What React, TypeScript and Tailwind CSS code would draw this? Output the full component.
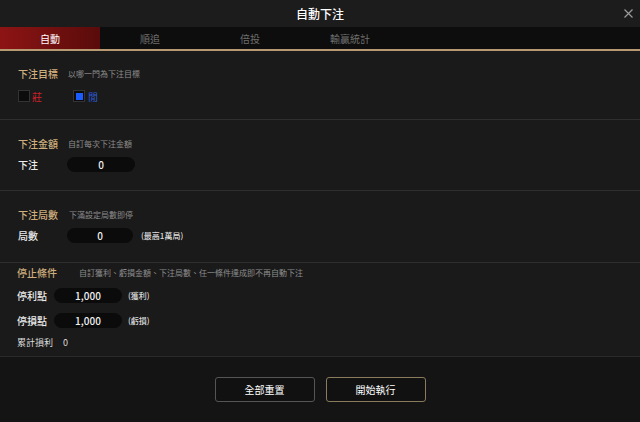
import React from "react";

const font = { fontFamily: '"Noto Sans CJK TC", "Noto Sans", sans-serif' };

const tabs = ["自動", "順追", "倍投", "輸贏統計"];

const SectionTitle = ({ title, sub, subClass }: { title: string; sub: string; subClass: string }) => (
  <div className="flex items-center h-[14px]">
    <span className="text-[10px] leading-[14px] font-medium text-[#cfae7e] w-[50px]">{title}</span>
    <span className={"text-[8px] leading-[14px] text-[#8e8e8e] " + subClass}>{sub}</span>
  </div>
);

const Pill = ({ value, className }: { value: string; className: string }) => (
  <div className={"h-[15px] rounded-full bg-[#0b0b0b] flex items-center justify-center text-[10px] font-medium text-[#f0f0f0] " + className}>
    {value}
  </div>
);

export default function App() {
  return (
    <div className="w-[640px] h-[422px] bg-[#1a1a1a] flex flex-col overflow-hidden" style={font}>
      <div className="h-[27px] bg-[#1c1c1c] flex items-center justify-center relative shrink-0">
        <span className="text-[12px] font-medium text-white">自動下注</span>
        <svg className="absolute left-[624px] top-[9px]" width="9" height="9" viewBox="0 0 9 9">
          <path d="M0.5 0.5 L8.5 8.5 M8.5 0.5 L0.5 8.5" stroke="#9a9a9a" strokeWidth="1.2" />
        </svg>
      </div>

      <div className="h-[24px] bg-[#0d0d0d] border-b-2 border-[#b89a72] flex shrink-0">
        {tabs.map((t, i) => (
          <div
            key={t}
            className={
              i === 0
                ? "w-[100px] flex items-center justify-center text-[10px] text-white bg-gradient-to-r from-[#8e1414] to-[#5a0b0b]"
                : "w-[100px] flex items-center justify-center text-[10px] text-[#6f6f6f]"
            }
          >
            {t}
          </div>
        ))}
      </div>

      {/* 下注目標 */}
      <div className="h-[69px] border-b border-[#2e2e2e] pl-[18px] pt-[16px] shrink-0">
        <SectionTitle title="下注目標" sub="以哪一門為下注目標" subClass="" />
        <div className="flex items-center mt-[9px] h-[12px]">
          <div className="w-[12px] h-[12px] bg-[#0c0c0c] border border-[#333333]" />
          <span className="ml-[2px] text-[10px] text-[#d0202c] w-[41px]">莊</span>
          <div className="w-[12px] h-[12px] bg-[#0c0c0c] border border-[#333333] flex items-center justify-center">
            <div className="w-[7px] h-[7px] bg-[#1a5cff]" />
          </div>
          <span className="ml-[3px] text-[10px] text-[#2a5bd8]">閒</span>
        </div>
      </div>

      {/* 下注金額 */}
      <div className="h-[71px] border-b border-[#2e2e2e] pl-[18px] pt-[17px] shrink-0">
        <SectionTitle title="下注金額" sub="自訂每次下注金額" subClass="" />
        <div className="flex items-center mt-[6px]">
          <span className="text-[10px] font-medium text-[#ececec] w-[49px]">下注</span>
          <Pill value="0" className="w-[68px]" />
        </div>
      </div>

      {/* 下注局數 */}
      <div className="h-[72px] border-b border-[#2e2e2e] pl-[18px] pt-[17px] shrink-0">
        <SectionTitle title="下注局數" sub="下滿設定局數即停" subClass="ml-[1px]" />
        <div className="flex items-center mt-[6px]">
          <span className="text-[10px] font-medium text-[#ececec] w-[49px]">局數</span>
          <Pill value="0" className="w-[66px]" />
          <span className="ml-[8px] text-[8px] font-medium text-[#dddddd]">(最高1萬局)</span>
        </div>
      </div>

      {/* 停止條件 */}
      <div className="h-[94px] border-b border-[#2a2a2a] pl-[17px] pt-[3px] shrink-0">
        <SectionTitle title="停止條件" sub="自訂獲利、虧損金額、下注局數、任一條件達成即不再自動下注" subClass="ml-[12px]" />
        <div className="flex items-center mt-[8px]">
          <span className="text-[10px] font-medium text-[#ececec] w-[37px]">停利點</span>
          <Pill value="1,000" className="w-[68px]" />
          <span className="ml-[6px] text-[8px] font-medium text-[#dddddd]">(獲利)</span>
        </div>
        <div className="flex items-center mt-[10px]">
          <span className="text-[10px] font-medium text-[#ececec] w-[37px]">停損點</span>
          <Pill value="1,000" className="w-[68px]" />
          <span className="ml-[6px] text-[8px] font-medium text-[#dddddd]">(虧損)</span>
        </div>
        <div className="flex items-center mt-[8px] h-[14px]">
          <span className="text-[9px] text-[#dddddd] w-[46px]">累計損利</span>
          <span className="text-[9px] text-[#dddddd]">0</span>
        </div>
      </div>

      <div className="flex-1 bg-[#141414] flex justify-center pt-[20px] gap-[11px]">
        <button className="w-[100px] h-[25px] rounded-[3px] border border-[#555555] bg-[#111111] text-[10px] text-white">
          全部重置
        </button>
        <button className="w-[100px] h-[25px] rounded-[3px] border border-[#8a7b5c] bg-[#111111] text-[10px] text-white">
          開始執行
        </button>
      </div>
    </div>
  );
}
